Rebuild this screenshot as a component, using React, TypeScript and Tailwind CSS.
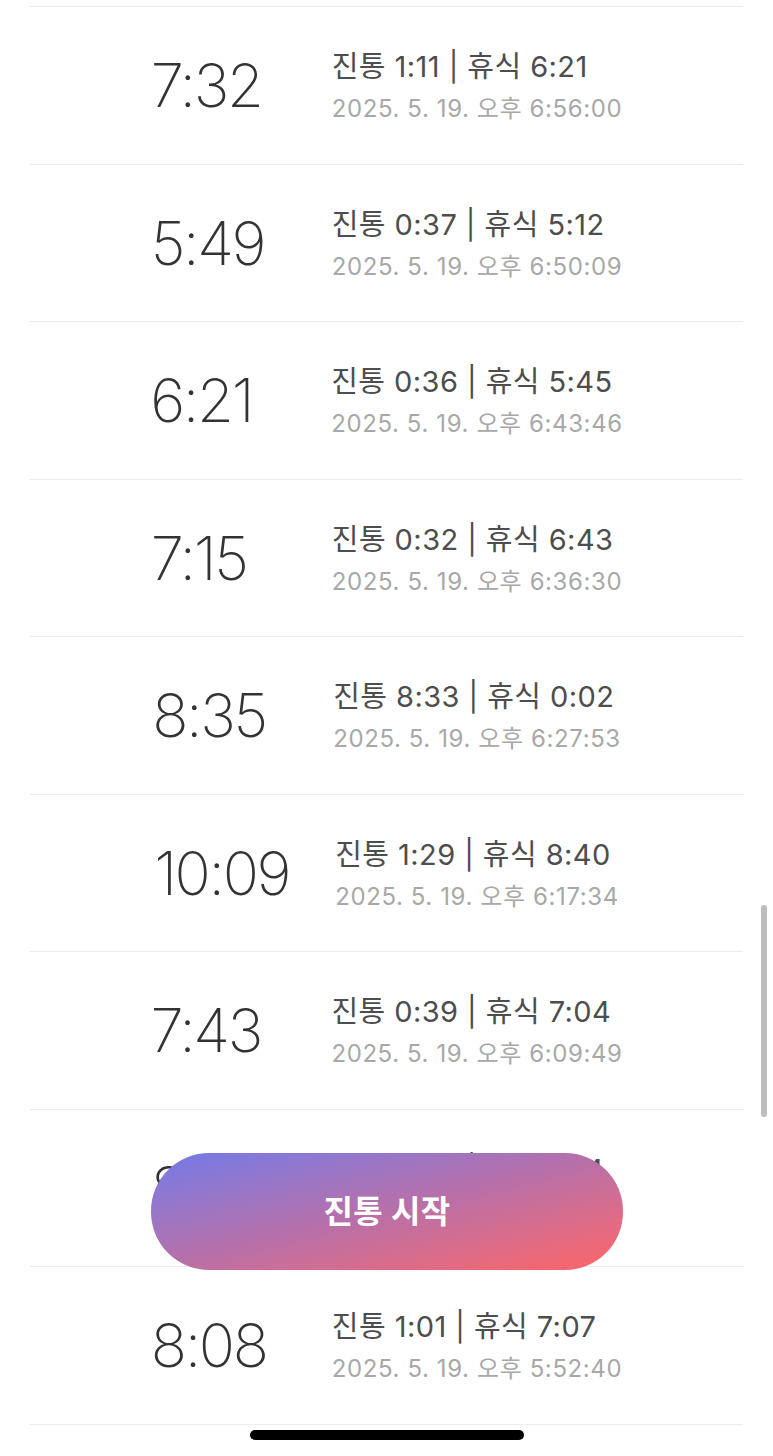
import React from "react";

type Record = {
  cycle: string;
  labor: string;
  rest: string;
  time: string;
};

const records: Record[] = [
  { cycle: "7:32", labor: "1:11", rest: "6:21", time: "6:56:00" },
  { cycle: "5:49", labor: "0:37", rest: "5:12", time: "6:50:09" },
  { cycle: "6:21", labor: "0:36", rest: "5:45", time: "6:43:46" },
  { cycle: "7:15", labor: "0:32", rest: "6:43", time: "6:36:30" },
  { cycle: "8:35", labor: "8:33", rest: "0:02", time: "6:27:53" },
  { cycle: "10:09", labor: "1:29", rest: "8:40", time: "6:17:34" },
  { cycle: "7:43", labor: "0:39", rest: "7:04", time: "6:09:49" },
  { cycle: "8:06", labor: "0:52", rest: "7:14", time: "6:02:06" },
  { cycle: "8:08", labor: "1:01", rest: "7:07", time: "5:52:40" },
];

const font = { fontFamily: '"Inter", "Noto Sans CJK KR", sans-serif' };

const RecordRow = ({ item }: { item: Record }) => (
  <div className="flex h-[157.5px] items-center justify-center border-b border-[#ececec]">
    <div className="w-[181px] shrink-0 whitespace-nowrap text-[60px] font-extralight leading-none tracking-[-0.04em] text-[#333]">
      {item.cycle}
    </div>
    <div className="flex flex-col gap-[8px] whitespace-nowrap pt-[4px]">
      <span className="text-[29px] font-normal leading-[36px] tracking-[0.015em] text-[#4d4d4d]">
        진통 {item.labor} | 휴식 {item.rest}
      </span>
      <span className="text-[24px] leading-[32px] tracking-[0.025em] text-[#a8a8a8]">
        2025. 5. 19. 오후 {item.time}
      </span>
    </div>
  </div>
);

export default function App() {
  return (
    <div className="relative h-[1456px] w-full overflow-hidden bg-white" style={font}>
      <div className="mx-[30px]">
        <div className="h-[7px] border-b border-[#ececec]" />
        {records.map((item, i) => (
          <RecordRow key={i} item={item} />
        ))}
      </div>

      {/* scroll indicator */}
      <div className="absolute right-[6px] top-[905px] h-[212px] w-[6px] rounded-full bg-[#bdbdbd]" />

      {/* start button */}
      <button
        type="button"
        className="absolute left-[151px] top-[1153px] flex h-[117px] w-[472px] items-center justify-center rounded-[58px] bg-gradient-to-br from-[#7179e9] via-[#b86fa8] to-[#ff6363]"
      >
        <span className="text-[32px] font-bold tracking-[0.01em] text-white">진통 시작</span>
      </button>

      {/* home indicator */}
      <div className="absolute left-[250px] top-[1430px] h-[10px] w-[274px] rounded-full bg-black" />
    </div>
  );
}
